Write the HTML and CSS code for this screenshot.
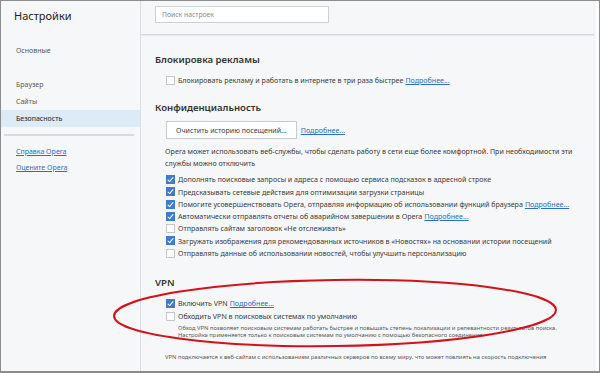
FILE: index.html
```html
<!DOCTYPE html>
<html lang="ru">
<head>
    <meta charset="UTF-8">
    <title>Настройки</title>
    <link rel="stylesheet" href="styles.css">
</head>
<body>
    <div class="window">
        <aside class="sidebar">
            <div class="sidebar-title">Настройки</div>
            <div class="nav-group">
                <a class="nav-item">Основные</a>
            </div>
            <div class="nav-group nav-group-main">
                <a class="nav-item">Браузер</a>
                <a class="nav-item">Сайты</a>
                <a class="nav-item active">Безопасность</a>
            </div>
            <div class="nav-sep"></div>
            <div class="nav-links">
                <a href="#">Справка Opera</a>
                <a href="#">Оцените Opera</a>
            </div>
        </aside>
        <main class="content">
            <div class="search-bar">
                <input class="search" type="text" placeholder="Поиск настроек">
            </div>
            <div class="content-sep"></div>

            <section class="block adblock">
                <h2>Блокировка рекламы</h2>
                <label class="row"><span class="cb"></span>Блокировать рекламу и работать в интернете в три раза быстрее <a href="#">Подробнее...</a></label>
            </section>

            <section class="block privacy">
                <h2>Конфиденциальность</h2>
                <div class="btn-line">
                    <button class="btn">Очистить историю посещений...</button>
                    <a href="#">Подробнее...</a>
                </div>
                <p class="desc">Opera может использовать веб-службы, чтобы сделать работу в сети еще более комфортной. При необходимости эти службы можно отключить</p>
                <div class="rows">
                    <label class="row"><span class="cb on"></span>Дополнять поисковые запросы и адреса с помощью сервиса подсказок в адресной строке</label>
                    <label class="row"><span class="cb on"></span>Предсказывать сетевые действия для оптимизации загрузки страницы</label>
                    <label class="row"><span class="cb on"></span>Помогите усовершенствовать Opera, отправляя информацию об использовании функций браузера <a href="#">Подробнее...</a></label>
                    <label class="row"><span class="cb on"></span>Автоматически отправлять отчеты об аварийном завершении в Opera <a href="#">Подробнее...</a></label>
                    <label class="row"><span class="cb"></span>Отправлять сайтам заголовок «Не отслеживать»</label>
                    <label class="row"><span class="cb on"></span>Загружать изображения для рекомендованных источников в «Новостях» на основании истории посещений</label>
                    <label class="row"><span class="cb"></span>Отправлять данные об использовании новостей, чтобы улучшить персонализацию</label>
                </div>
            </section>

            <section class="block vpn">
                <h2>VPN</h2>
                <label class="row"><span class="cb on"></span>Включить VPN <a href="#">Подробнее...</a></label>
                <label class="row"><span class="cb"></span>Обходить VPN в поисковых системах по умолчанию</label>
                <p class="hint">Обход VPN позволяет поисковым системам работать быстрее и повышать степень локализации и релевантности результатов поиска. Настройка применяется только к поисковым системам по умолчанию с помощью безопасного соединения.</p>
                <p class="note">VPN подключается к веб-сайтам с использованием различных серверов по всему миру, что может повлиять на скорость подключения</p>
            </section>

            <svg class="mark" width="460" height="80" viewBox="0 0 460 80">
                <ellipse cx="230" cy="40" rx="221" ry="33" transform="rotate(-0.8 230 40)" fill="none" stroke="#d3121b" stroke-width="2"/>
            </svg>
        </main>
        <div class="scroll"></div>
    </div>
</body>
</html>
```

FILE: styles.css
```css
:root {
    --bg: #f5f7f8;
    --text: #3a3a3a;
    --muted: #595959;
    --link: #2a6fc9;
    --line: #dcdfe2;
}
* { box-sizing: border-box; }
body {
    margin: 0;
    font-family: 'Noto Sans', 'Open Sans', Arial, sans-serif;
    color: var(--text);
    background: #fff;
}
a {
    color: var(--link);
    text-decoration: underline;
}
.window {
    width: 600px;
    height: 373px;
    border: 1px solid #8c8c8c;
    border-bottom-width: 2px;
    display: flex;
    background: var(--bg);
    overflow: hidden;
}

/* sidebar */
.sidebar {
    width: 140px;
    flex: none;
    border-right: 1px solid var(--line);
    display: flex;
    flex-direction: column;
}
.sidebar-title {
    font-size: 11px;
    line-height: 30px;
    height: 30px;
    padding-left: 13px;
    color: #222;
}
.nav-group {
    display: flex;
    flex-direction: column;
    padding-top: 10.5px;
}
.nav-group-main {
    padding-top: 17px;
}
.nav-item {
    font-size: 7px;
    color: var(--muted);
    line-height: 17px;
    padding-left: 15px;
    text-decoration: none;
}
.nav-item.active {
    background: #dcebf5;
    color: #222;
}
.nav-sep {
    height: 2px;
    margin: 7px 6px 10.5px 3px;
    background: #d8dadc;
}
.nav-links {
    display: flex;
    flex-direction: column;
    padding-left: 15px;
    gap: 4px;
}
.nav-links a {
    font-size: 7px;
    line-height: 12px;
}

/* main */
.content {
    flex: 1;
    position: relative;
    min-width: 0;
}
.search-bar {
    padding: 5px 0 0 14px;
    height: 33px;
}
.search {
    display: block;
    width: 174px;
    height: 17px;
    border: 1px solid #cfd2d4;
    background: #fff;
    font: 6.8px 'Noto Sans', sans-serif;
    padding: 0 6px;
    outline: none;
}
.search::placeholder { color: #8a8a8a; }
.content-sep {
    height: 2px;
    border-top: 1px solid #d5d8db;
    border-bottom: 1px solid #e8eaec;
}
.block {
    padding-left: 14px;
}
.block h2 {
    font-size: 9.6px;
    font-weight: 600;
    color: #333;
    margin: 0;
    line-height: 16px;
}
.adblock h2 { margin-top: 16px; }
.privacy h2 { margin-top: 14px; }
.vpn h2 { margin-top: 16px; }

.row {
    display: flex;
    align-items: center;
    font-size: 7.1px;
    line-height: 12.3px;
    padding-left: 11px;
    white-space: nowrap;
    color: var(--text);
}
.row a { margin-left: 2px; }
.block > .row { margin-top: 6px; }
.vpn > .row + .row { margin-top: 0.7px; }
.cb {
    width: 9px;
    height: 9px;
    border: 1px solid #c4c7ca;
    background: #fff;
    margin-right: 3px;
    flex: none;
    position: relative;
}
.cb.on {
    background: #3d7cd1;
    border-color: #3d7cd1;
}
.cb.on::after {
    content: '';
    position: absolute;
    left: 2px;
    top: 0;
    width: 2px;
    height: 5px;
    border: solid #fff;
    border-width: 0 1.5px 1.5px 0;
    transform: rotate(40deg);
}
.btn-line {
    display: flex;
    align-items: center;
    gap: 4px;
    padding-left: 11px;
    margin-top: 5px;
    font-size: 7.1px;
}
.btn {
    height: 18px;
    padding: 0 9px;
    border: 1px solid #c9ccce;
    background: #fff;
    font: 7.1px 'Noto Sans', sans-serif;
    color: var(--text);
}
.desc {
    font-size: 7.1px;
    line-height: 12px;
    margin: 6px 0 4px 10px;
    max-width: 418px;
}
.hint {
    font-size: 5.8px;
    line-height: 7.5px;
    color: var(--muted);
    margin: 2px 0 0 23px;
    max-width: 392px;
}
.note {
    font-size: 5.8px;
    line-height: 8px;
    color: var(--muted);
    margin: 13.8px 0 0 10px;
    white-space: nowrap;
}
.mark {
    position: absolute;
    left: -36px;
    top: 272px;
    pointer-events: none;
}
.scroll {
    width: 5px;
    flex: none;
    background: #fbfbfb;
    border-left: 1px solid #eceeef;
}
```
